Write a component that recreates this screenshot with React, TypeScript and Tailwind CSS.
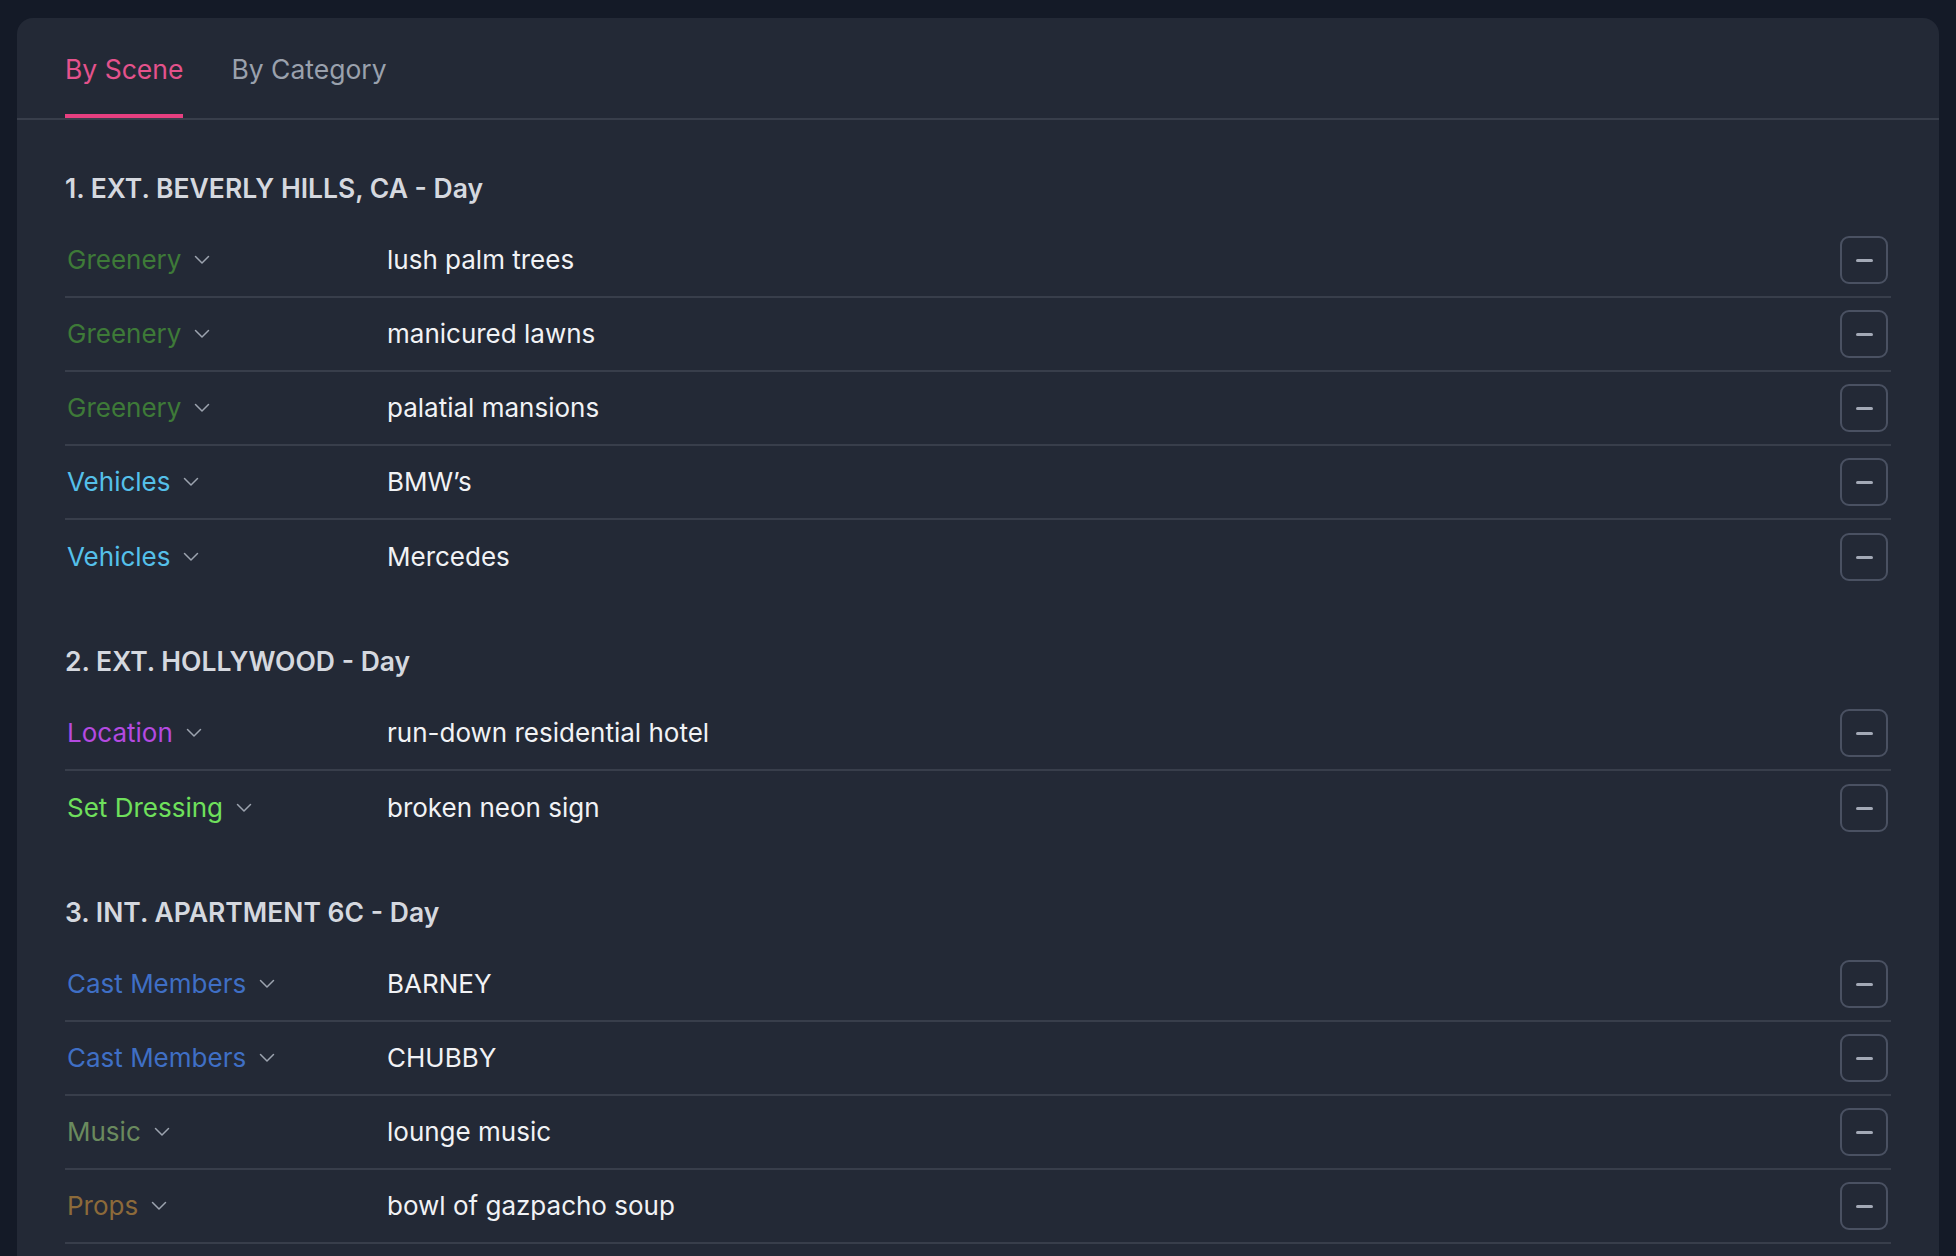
import { useState } from "react";

type Item = { category: string; color: string; text: string };
type Scene = { title: string; items: Item[] };

const GREEN = "text-[#3e7a38]";
const SKY = "text-[#55c0ea]";
const PURPLE = "text-[#b44ae0]";
const LIME = "text-[#6fe05c]";
const BLUE = "text-[#3f6fc5]";
const OLIVE = "text-[#6a8a5e]";
const BROWN = "text-[#8c6a3a]";

const scenes: Scene[] = [
  {
    title: "1. EXT. BEVERLY HILLS, CA - Day",
    items: [
      { category: "Greenery", color: GREEN, text: "lush palm trees" },
      { category: "Greenery", color: GREEN, text: "manicured lawns" },
      { category: "Greenery", color: GREEN, text: "palatial mansions" },
      { category: "Vehicles", color: SKY, text: "BMW’s" },
      { category: "Vehicles", color: SKY, text: "Mercedes" },
    ],
  },
  {
    title: "2. EXT. HOLLYWOOD - Day",
    items: [
      { category: "Location", color: PURPLE, text: "run-down residential hotel" },
      { category: "Set Dressing", color: LIME, text: "broken neon sign" },
    ],
  },
  {
    title: "3. INT. APARTMENT 6C - Day",
    items: [
      { category: "Cast Members", color: BLUE, text: "BARNEY" },
      { category: "Cast Members", color: BLUE, text: "CHUBBY" },
      { category: "Music", color: OLIVE, text: "lounge music" },
      { category: "Props", color: BROWN, text: "bowl of gazpacho soup" },
      { category: "Props", color: BROWN, text: "martini glasses" },
    ],
  },
];

function Chevron() {
  return (
    <svg width="16" height="10" viewBox="0 0 16 10" fill="none" className="shrink-0">
      <path d="M1.5 1.5 L8 8 L14.5 1.5" stroke="#9ca3af" strokeWidth="1.5" strokeLinecap="round" strokeLinejoin="round" />
    </svg>
  );
}

function Row({ item, last }: { item: Item; last: boolean }) {
  return (
    <div className={`flex items-center h-[74px] ${last ? "" : "border-b-2 border-[#383e4b]"}`}>
      <div className="w-[322px] shrink-0 pl-[2px]">
        <button className={`flex items-center gap-[13px] text-[26px] leading-[32px] ${item.color}`}>
          <span>{item.category}</span>
          <Chevron />
        </button>
      </div>
      <div className="flex-1 text-[26px] leading-[32px] text-[#f1f2f5]">{item.text}</div>
      <button className="w-[48px] h-[48px] mr-[3px] shrink-0 rounded-[9px] border-2 border-[#4a5162] flex items-center justify-center">
        <span className="block w-[17px] h-[3px] rounded-full bg-[#a3a9b6]"></span>
      </button>
    </div>
  );
}

export default function App() {
  const [tab, setTab] = useState("scene");

  return (
    <div className="min-h-screen bg-[#141a27] pt-[18px] px-[17px] font-['Inter','Liberation_Sans',sans-serif]">
      <div className="rounded-t-[16px] bg-[#232936] min-h-[1300px]">
        {/* Tabs */}
        <div className="flex items-start gap-[48px] px-[48px] border-b-2 border-[#383e4b]">
          <button
            onClick={() => setTab("scene")}
            className={`relative pt-[37px] pb-[35px] text-[26.5px] leading-[28px] ${tab === "scene" ? "text-[#e4528c]" : "text-[#9aa1ad]"}`}
          >
            By Scene
            {tab === "scene" && <span className="absolute left-0 right-0 bottom-0 h-[4px] bg-[#e63f80]"></span>}
          </button>
          <button
            onClick={() => setTab("category")}
            className={`relative pt-[37px] pb-[35px] text-[26.5px] leading-[28px] ${tab === "category" ? "text-[#e4528c]" : "text-[#9aa1ad]"}`}
          >
            By Category
            {tab === "category" && <span className="absolute left-0 right-0 bottom-0 h-[4px] bg-[#e63f80]"></span>}
          </button>
        </div>

        {/* Scenes */}
        <div className="px-[48px] pt-[52px] flex flex-col gap-[51px]">
          {scenes.map((scene) => (
            <div key={scene.title}>
              <h2 className="text-[26.5px] leading-[32px] font-semibold text-[#d5d8df] mb-[20px]">{scene.title}</h2>
              <div>
                {scene.items.map((item, i) => (
                  <Row key={i} item={item} last={i === scene.items.length - 1} />
                ))}
              </div>
            </div>
          ))}
        </div>
      </div>
    </div>
  );
}
